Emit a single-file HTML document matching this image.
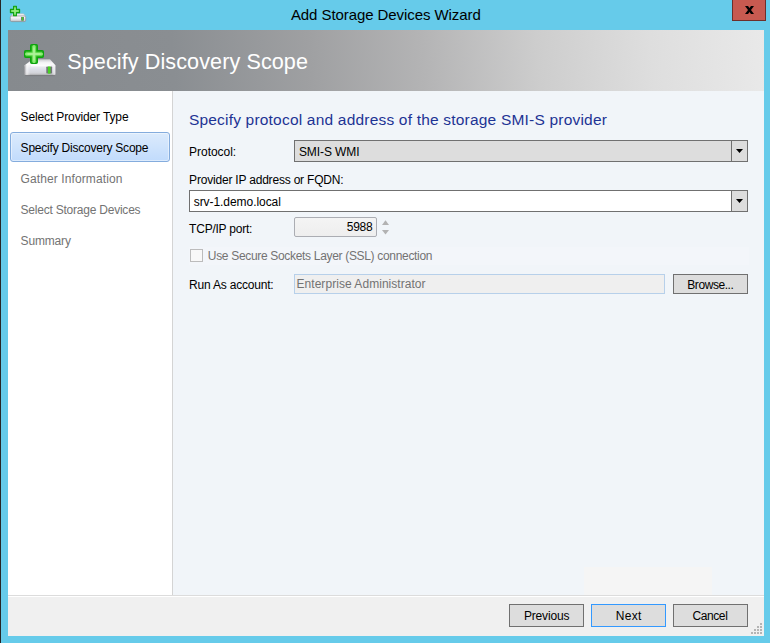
<!DOCTYPE html>
<html>
<head>
<meta charset="utf-8">
<title>Add Storage Devices Wizard</title>
<style>
html,body{margin:0;padding:0;}
body{width:770px;height:643px;background:#66cbea;position:relative;overflow:hidden;font-family:"Liberation Sans",sans-serif;}
div,span{box-sizing:border-box;}
.abs{position:absolute;}
.t{position:absolute;white-space:nowrap;line-height:1;font-family:"Liberation Sans",sans-serif;}
#edge{left:0;top:0;width:1px;height:643px;background:#262626;}
#close{left:732px;top:0;width:34px;height:21px;background:#c75a50;border:1px solid #6e2f2a;border-top:none;}
#header{left:8px;top:30px;width:756px;height:61px;background:linear-gradient(85.4deg,#868a8e 0%,#8a8e92 22%,#9fa0a2 40%,#b4b4b5 55%,#cdcdcd 70%,#dedede 85%,#e9e9e9 100%);}
#sidebar{left:8px;top:91px;width:164px;height:504px;background:#ffffff;}
#divider{left:172px;top:91px;width:1px;height:504px;background:#d4d4d4;}
#content{left:173px;top:91px;width:591px;height:504px;background:#f1f5f9;}
#footer{left:8px;top:595px;width:756px;height:41px;background:#f0f0f0;border-top:1px solid #dcdcdc;box-shadow:inset 0 1px 0 #ffffff;}
#sel{left:10px;top:132px;width:160px;height:30px;border:1px solid #84acdd;border-radius:3px;background:linear-gradient(180deg,#dcebfc 0%,#c1dbfc 100%);box-shadow:inset 0 0 0 1px rgba(255,255,255,.45);}
.btn{position:absolute;background:#dddddd;border:1px solid #707070;}
.combo{position:absolute;border:1px solid #707070;}
</style>
</head>
<body>
<div class="abs" id="edge"></div>
<div class="abs" id="close"></div>
<svg class="abs" style="left:744px;top:5px" width="11" height="10" viewBox="744 5 11 10"><path d="M745 6 H748 L754 14 H751 Z" fill="#000"/><path d="M754 6 H751 L745 14 H748 Z" fill="#000"/></svg>
<div class="abs" id="header"></div>
<div class="abs" id="sidebar"></div>
<div class="abs" id="divider"></div>
<div class="abs" id="content"></div>
<div class="abs" style="left:584px;top:567px;width:128px;height:28px;background:#f5f5f5;"></div>
<div class="abs" style="left:189px;top:247px;width:560px;height:18px;background:#f3f6fa;"></div>
<div class="abs" id="footer"></div>
<div class="abs" id="sel"></div>

<!-- protocol combo -->
<div class="combo" style="left:294px;top:140px;width:454px;height:22px;background:#dddddd;"></div>
<div class="abs" style="left:731px;top:141px;width:1px;height:20px;background:#707070;"></div>
<svg class="abs" style="left:736px;top:149px" width="7" height="4" viewBox="0 0 7 4"><path d="M0 0 H7 L3.5 4 Z" fill="#000"/></svg>
<!-- address combo -->
<div class="combo" style="left:189px;top:190px;width:559px;height:22px;background:#ffffff;"></div>
<div class="abs" style="left:731px;top:191px;width:16px;height:20px;background:#dddddd;border-left:1px solid #707070;"></div>
<svg class="abs" style="left:736px;top:199px" width="7" height="4" viewBox="0 0 7 4"><path d="M0 0 H7 L3.5 4 Z" fill="#000"/></svg>
<!-- port -->
<div class="abs" style="left:294px;top:217px;width:83px;height:20px;border:1px solid #abadb3;border-radius:2px;background:linear-gradient(180deg,#f4f4f4,#eeeeee);"></div>
<svg class="abs" style="left:381px;top:219px" width="9" height="17" viewBox="0 0 9 17"><path d="M1 6 L4.5 1.2 L8 6 Z" fill="#b2b2b2"/><path d="M1 11 L4.5 15.4 L8 11 Z" fill="#b2b2b2"/></svg>
<!-- checkbox -->
<div class="abs" style="left:190px;top:249px;width:13px;height:13px;border:1px solid #bcbcbc;background:#f8f8f8;"></div>
<!-- run as -->
<div class="abs" style="left:294px;top:274px;width:371px;height:20px;border:1px solid #b7d0ea;background:#efefef;"></div>
<div class="btn" style="left:673px;top:274px;width:75px;height:20px;"></div>
<!-- footer buttons -->
<div class="btn" style="left:509px;top:604px;width:75px;height:23px;"></div>
<div class="btn" style="left:591px;top:604px;width:75px;height:23px;border-color:#3399ff;"></div>
<div class="btn" style="left:673px;top:604px;width:75px;height:23px;"></div>
<!-- grip -->
<svg class="abs" style="left:751px;top:623px" width="11" height="11" viewBox="0 0 11 11" shape-rendering="crispEdges"><g fill="#b4b4b4"><rect x="9" y="0" width="2" height="2"/><rect x="6" y="3" width="2" height="2"/><rect x="9" y="3" width="2" height="2"/><rect x="3" y="6" width="2" height="2"/><rect x="6" y="6" width="2" height="2"/><rect x="9" y="6" width="2" height="2"/><rect x="0" y="9" width="2" height="2"/><rect x="3" y="9" width="2" height="2"/><rect x="6" y="9" width="2" height="2"/><rect x="9" y="9" width="2" height="2"/></g></svg>


<!-- title icon -->
<svg class="abs" style="left:9px;top:5px" width="18" height="18" viewBox="0 0 18 18">
<defs>
<linearGradient id="g1a" x1="0" y1="0" x2="0" y2="1"><stop offset="0" stop-color="#ffffff"/><stop offset="0.55" stop-color="#e6e6ee"/><stop offset="1" stop-color="#bdbdbd"/></linearGradient>
<radialGradient id="g1b" cx="0.5" cy="0.5" r="0.6"><stop offset="0" stop-color="#a4ee8e"/><stop offset="0.6" stop-color="#55d53f"/><stop offset="1" stop-color="#14a514"/></radialGradient>
</defs>
<path d="M4 8.8 L14.5 8.8 L16.6 11.2 L1.4 11.2 Z" fill="#f4f4f6" stroke="#b5b5b8" stroke-width="0.5"/>
<rect x="1.3" y="11" width="15.4" height="5.6" rx="1.4" fill="url(#g1a)" stroke="#8d8d90" stroke-width="0.7"/>
<rect x="12" y="12" width="3" height="3.6" fill="#77777a"/>
<rect x="12.8" y="12" width="1.4" height="3.6" fill="#46d022"/>
<path d="M4.6 1.2 H7.4 V4.4 H10.6 V7.6 H7.4 V10.8 H4.6 V7.6 H1.4 V4.4 H4.6 Z" fill="#4fd03c" stroke="#10a010" stroke-width="1.1" stroke-linejoin="round"/>
<path d="M6 2.4 V9.6 M2.4 6 H9.6" stroke="#9aec86" stroke-width="1.5" fill="none"/>
</svg>
<!-- header icon -->
<svg class="abs" style="left:23px;top:43px" width="34" height="34" viewBox="0 0 34 34">
<defs>
<linearGradient id="g2a" x1="0" y1="0" x2="0" y2="1"><stop offset="0" stop-color="#f4f4f6"/><stop offset="0.45" stop-color="#dcdee7"/><stop offset="0.8" stop-color="#d2d3d8"/><stop offset="1" stop-color="#a9a9ab"/></linearGradient>
<linearGradient id="g2s" x1="0" y1="0" x2="1" y2="0"><stop offset="0" stop-color="#7c7c80" stop-opacity="0.9"/><stop offset="0.09" stop-color="#ffffff" stop-opacity="0.55"/><stop offset="0.2" stop-color="#ffffff" stop-opacity="0"/><stop offset="0.88" stop-color="#ffffff" stop-opacity="0"/><stop offset="0.95" stop-color="#ffffff" stop-opacity="0.4"/><stop offset="1" stop-color="#7c7c80" stop-opacity="0.9"/></linearGradient>
<linearGradient id="g2c" x1="0" y1="0" x2="0" y2="1"><stop offset="0" stop-color="#c9c9cd"/><stop offset="0.5" stop-color="#f2f2f4"/><stop offset="1" stop-color="#ffffff"/></linearGradient>
<radialGradient id="g2b" cx="0.5" cy="0.5" r="0.6"><stop offset="0" stop-color="#b4f2a0"/><stop offset="0.5" stop-color="#6fdf58"/><stop offset="1" stop-color="#16aa16"/></radialGradient>
<filter id="bl" x="-10%" y="-10%" width="120%" height="120%"><feGaussianBlur stdDeviation="0.45"/></filter>
</defs>
<g filter="url(#bl)">
<path d="M9.5 16.2 L27 16.2 L32.6 22.4 L1.4 22.4 Z" fill="url(#g2c)"/>
<rect x="1" y="21.8" width="32" height="10.4" rx="2.2" fill="url(#g2a)"/>
<rect x="1" y="21.8" width="32" height="10.4" rx="2.2" fill="url(#g2s)"/>
<path d="M2.4 32.6 H31.6" stroke="#6f6f73" stroke-width="0.9" opacity="0.75"/>
<rect x="23.3" y="23.6" width="5.8" height="6.8" rx="0.6" fill="#74747a"/>
<rect x="24.9" y="23.2" width="2.6" height="7.4" fill="#46d322"/>
<path d="M8.8 1.8 H13.2 Q14.2 1.8 14.2 2.8 V7.8 H19.2 Q20.2 7.8 20.2 8.8 V13.2 Q20.2 14.2 19.2 14.2 H14.2 V19.2 Q14.2 20.2 13.2 20.2 H8.8 Q7.8 20.2 7.8 19.2 V14.2 H2.8 Q1.8 14.2 1.8 13.2 V8.8 Q1.8 7.8 2.8 7.8 H7.8 V2.8 Q7.8 1.8 8.8 1.8 Z" fill="#3fc92f" stroke="#0fa30f" stroke-width="1.6" stroke-linejoin="round"/>
<path d="M11 3.6 V18.4 M3.6 11 H18.4" stroke="#8cea76" stroke-width="3.2" stroke-linecap="round" fill="none"/>
<path d="M11 5 V17 M5 11 H17" stroke="#b9f5a6" stroke-width="1.4" stroke-linecap="round" fill="none" opacity="0.8"/>
<path d="M8 22.7 H28" stroke="#ffffff" stroke-width="1.2" opacity="0.9"/>
</g>
</svg>

<span class="t" id="t_title" style="left:290.9px;top:7.3px;font-size:15px;letter-spacing:-0.074px;color:#000000">Add Storage Devices Wizard</span>
<span class="t" id="t_header" style="left:67.2px;top:51.0px;font-size:21.6px;letter-spacing:0.089px;color:#ffffff">Specify Discovery Scope</span>
<span class="t" id="t_s1" style="left:20.6px;top:110.8px;font-size:12px;letter-spacing:-0.132px;color:#000000">Select Provider Type</span>
<span class="t" id="t_s2" style="left:20.6px;top:141.8px;font-size:12px;letter-spacing:-0.220px;color:#000000">Specify Discovery Scope</span>
<span class="t" id="t_s3" style="left:20.6px;top:172.8px;font-size:12px;letter-spacing:0.102px;color:#737373">Gather Information</span>
<span class="t" id="t_s4" style="left:20.6px;top:203.8px;font-size:12px;letter-spacing:-0.225px;color:#737373">Select Storage Devices</span>
<span class="t" id="t_s5" style="left:20.6px;top:234.8px;font-size:12px;letter-spacing:-0.174px;color:#737373">Summary</span>
<span class="t" id="t_head" style="left:188.9px;top:111.9px;font-size:15.5px;letter-spacing:0.199px;color:#1d3394">Specify protocol and address of the storage SMI-S provider</span>
<span class="t" id="t_proto" style="left:189.1px;top:145.8px;font-size:12px;letter-spacing:-0.032px;color:#000000">Protocol:</span>
<span class="t" id="t_smis" style="left:298.9px;top:145.8px;font-size:12px;letter-spacing:-0.079px;color:#000000">SMI-S WMI</span>
<span class="t" id="t_prov" style="left:189.1px;top:173.8px;font-size:12px;letter-spacing:-0.198px;color:#000000">Provider IP address or FQDN:</span>
<span class="t" id="t_srv" style="left:193.7px;top:195.8px;font-size:12px;letter-spacing:-0.055px;color:#000000">srv-1.demo.local</span>
<span class="t" id="t_tcp" style="left:189.1px;top:222.8px;font-size:12px;letter-spacing:-0.228px;color:#000000">TCP/IP port:</span>
<span class="t" id="t_port" style="left:346.7px;top:221.3px;font-size:12px;letter-spacing:-0.234px;color:#000000">5988</span>
<span class="t" id="t_ssl" style="left:207.8px;top:249.8px;font-size:12px;letter-spacing:-0.319px;color:#737373">Use Secure Sockets Layer (SSL) connection</span>
<span class="t" id="t_run" style="left:189.1px;top:279.4px;font-size:12px;letter-spacing:-0.206px;color:#000000">Run As account:</span>
<span class="t" id="t_ent" style="left:296.5px;top:277.8px;font-size:12px;letter-spacing:0.045px;color:#737373">Enterprise Administrator</span>
<span class="t" id="t_browse" style="left:687.3px;top:278.8px;font-size:12px;letter-spacing:-0.439px;color:#000000">Browse...</span>
<span class="t" id="t_prev" style="left:523.9px;top:609.8px;font-size:12px;letter-spacing:-0.170px;color:#000000">Previous</span>
<span class="t" id="t_next" style="left:615.8px;top:609.8px;font-size:12px;letter-spacing:0.304px;color:#000000">Next</span>
<span class="t" id="t_cancel" style="left:692.5px;top:609.8px;font-size:12px;letter-spacing:-0.412px;color:#000000">Cancel</span>
</body>
</html>
